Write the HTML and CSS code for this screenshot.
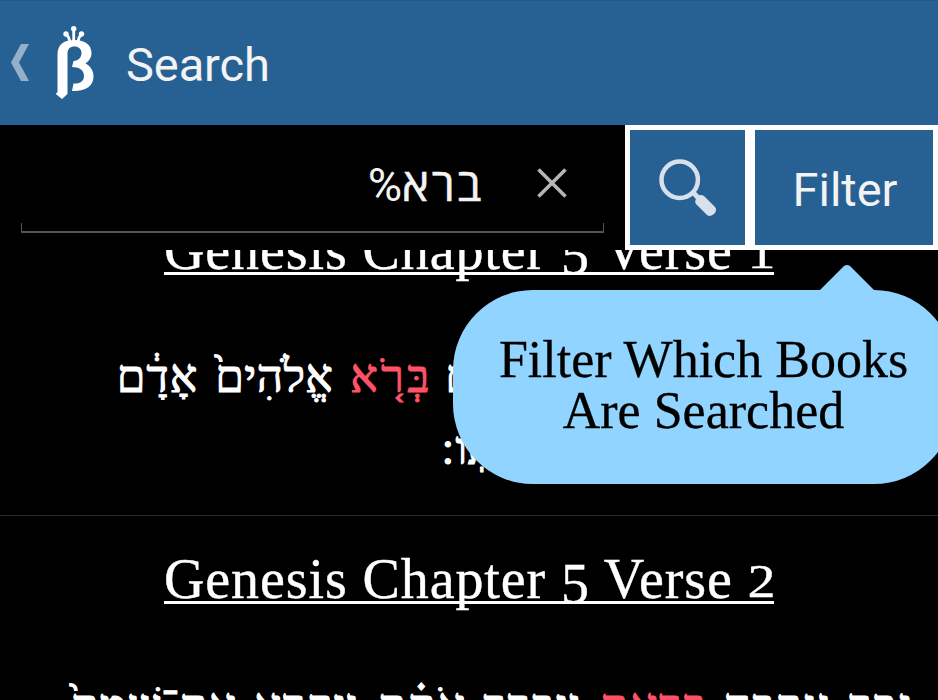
FILE: index.html
```html
<!DOCTYPE html>
<html lang="en">
<head>
<meta charset="utf-8">
<title>Search</title>
<link rel="stylesheet" href="styles.css">
</head>
<body>
<header class="bar">
  <svg class="back" width="20" height="38" viewBox="0 0 20 38"><path d="M10 0h8L8 18.500 18 37h-8L0 18.500z" fill="#93afc9"/></svg>
  <svg class="logo" width="42" height="76" viewBox="0 0 42 76">
    <path d="M.8 68L2.500 66V29C2.500 19 8 14 19.500 14 30 14 36.500 19 36.500 27c0 4.500-2.500 8-6 10.500 5 2.500 8 7 8 13C38.500 60 31 65.500 17 65l1.500-7.500C25 58 29 55 29 50c0-6-5-9-12-9l1.500-6c5-.5 8-3.500 8-8 0-4-3-6.500-7-6.500-4.500 0-7 2.500-7 7V68L7 73z" fill="#fff"/>
    <path d="M18.700 17V5M15 17Q14 10 11 8.500M23 17Q23.500 10 27 8.500" fill="none" stroke="#fff" stroke-width="2.800"/>
    <g fill="#fff"><circle cx="18.700" cy="2.800" r="2.700"/><circle cx="11" cy="8" r="2.700"/><circle cx="26.500" cy="8" r="2.700"/></g>
  </svg>
  <h1 class="title">Search</h1>
</header>
<section class="search">
  <div class="field">
    <div class="query" dir="rtl"><span>ברא</span><span class="pct">%</span></div>
    <svg class="clear" width="30" height="30" viewBox="0 0 30 30"><path d="M1.500 1.500l27 27M28.500 1.500l-27 27" stroke="#b5b5b5" stroke-width="3.600"/></svg>
  </div>
  <div class="buttons">
    <div class="button find">
      <svg width="58" height="58" viewBox="0 0 58 58"><circle cx="20.700" cy="20.700" r="18.200" fill="none" stroke="#d8e1eb" stroke-width="4.500"/><path d="M33.500 33l6 6" stroke="#d8e1eb" stroke-width="5"/><path d="M38 38q3-3.500 7-1l11 11q2.500 3-.5 6.500-4 4-7.500 1.500L37 45q-2-3 1-7z" fill="#d8e1eb"/></svg>
    </div>
    <div class="button filter">Filter</div>
  </div>
</section>
<main class="list">
  <article class="verse first">
    <h2 class="ref"><span>Genesis Chapter <i class="low">5</i> Verse <i class="small">1</i></span></h2>
    <p class="line one" dir="rtl"><span class="w4">ם</span><span class="hit w3">בְּרֹ֤א</span><span class="w2">אֱלֹהִים֙</span><span class="w1">אָדָ֔ם</span></p>
    <p class="line two" dir="rtl">אתֽו<span class="stop">׃</span></p>
  </article>
  <article class="verse second">
    <h2 class="ref"><span>Genesis Chapter <i class="low">5</i> Verse <i class="small">2</i></span></h2>
    <p class="line three" dir="rtl"><span>זכר</span><span>ונקבה</span><span class="hit">בראם</span><span>ויברך</span><span>אֹת֗ם</span><span>ויקרא</span><span class="w7">את־שׁמם֙</span></p>
  </article>
</main>
<aside class="tip">
  <svg class="arrow" width="56" height="26" viewBox="0 0 56 26"><path d="M0 26L25 1q3-2 6 0l25 25z" fill="#90d4ff"/></svg>
  <span class="tip1">Filter Which Books</span><span class="tip2">Are Searched</span>
</aside>
</body>
</html>
```
FILE: styles.css
```css
* { box-sizing: border-box; }
body { margin: 0; width: 938px; height: 700px; overflow: hidden; position: relative; display: flex; flex-direction: column; background: #000; color: #fff; font-family: "Liberation Serif", serif; }
h1, h2, p { margin: 0; font-weight: 400; }
.bar { flex: 0 0 125px; display: flex; align-items: flex-start; background: #276193; border-top: 1px solid #235784; font-family: Roboto, sans-serif; }
.back { margin: 43px 0 0 11px; }
.logo { margin: 25px 0 0 24px; }
.title { margin: 32px 0 0 29px; font-size: 47px; line-height: 64px; letter-spacing: -.1px; color: #f3f3f3; }
.search { flex: 0 0 125px; display: flex; background: #000; }
.field { width: 583px; height: 108px; margin-left: 21px; display: flex; justify-content: flex-end; align-items: flex-start; background: linear-gradient(#555, #555) 0 100% / 100% 2px no-repeat, linear-gradient(#555, #555) 0 100% / 1px 10px no-repeat, linear-gradient(#555, #555) 100% 100% / 1px 10px no-repeat; }
.query { display: flex; align-items: baseline; margin-top: 26px; font: 46px/64px "Open Sans", "Liberation Sans", sans-serif; letter-spacing: 2.600px; color: #f3f3f3; -webkit-text-stroke: .5px #f3f3f3; }
.pct { font-family: Roboto, sans-serif; font-size: 47px; -webkit-text-stroke: 0; letter-spacing: 0; }
.clear { margin: 43px 37px 0 53px; }
.buttons { width: 313px; margin-left: 21px; padding: 5px; display: flex; gap: 10px; background: #fff; }
.button { display: flex; align-items: center; justify-content: center; background: #276193; }
.find { width: 115px; }
.filter { width: 178px; font: 47px/64px Roboto, sans-serif; color: #f3f3f3; padding: 5px 0 0 2px; }
.list { flex: 1; overflow: hidden; }
.first { height: 266px; border-bottom: 1px solid #2b2b2b; display: flex; flex-direction: column; }
.ref { display: flex; justify-content: center; font-size: 56px; line-height: 62px; letter-spacing: .9px; white-space: nowrap; -webkit-text-stroke: .4px #fff; }
.ref span { border-bottom: 3px solid #fff; height: 56px; width: 610px; }
.ref i { font-style: normal; display: inline-block; line-height: 40px; }
.low { transform: translate(0, 5px); }
.small { transform: scaleY(.84); transform-origin: 50% 85%; }
.first .ref { margin-top: -31px; height: 56px; }
.second .ref { padding-top: 32px; height: 88px; }
.line { display: flex; font-size: 46px; line-height: 72px; white-space: nowrap; -webkit-text-stroke: 1px currentColor; }
.one { margin-top: 66px; padding-right: 464px; gap: 17px; }
.w1 { letter-spacing: 1px; }
.w2 { letter-spacing: .3px; }
.w3 { letter-spacing: 3.500px; }
.w4 { width: 24px; }
.two { padding-right: 415px; }
.stop { margin-right: 14px; }
.three { margin-top: 66px; padding-right: 26px; gap: 17px; letter-spacing: 1.600px; }
.w7 { letter-spacing: .8px; }
.hit { color: #ff5266; }
.tip { position: absolute; left: 453px; top: 290px; width: 501px; height: 194px; border-radius: 80px; background: #90d4ff; color: #000; font-size: 52px; line-height: 51px; padding-top: 44px; display: flex; flex-direction: column; align-items: center; white-space: nowrap; -webkit-text-stroke: .3px #000; }
.arrow { position: absolute; left: 366px; top: -25px; }
```
